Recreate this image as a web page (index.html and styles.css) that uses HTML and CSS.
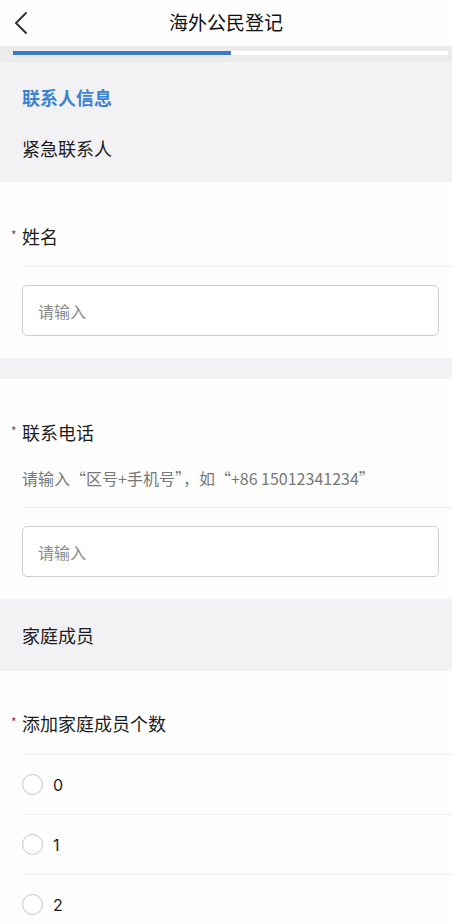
FILE: index.html
```html
<!DOCTYPE html>
<html lang="zh-CN">
<head>
  <meta charset="UTF-8">
  <title>海外公民登记</title>
  <link rel="stylesheet" href="styles.css">
</head>
<body>

  <!-- 顶部导航 -->
  <div class="nav-bar">
    <span class="nav-back">
      <svg width="16" height="24" viewBox="0 0 16 24"><path d="M13 2 L3 12 L13 22" fill="none" stroke="#333" stroke-width="2" stroke-linecap="round" stroke-linejoin="round"/></svg>
    </span>
    <div class="nav-title">海外公民登记</div>
  </div>

  <!-- 进度条 -->
  <div class="progress-wrap">
    <div class="progress-track"><div class="progress-fill" style="width: 50%"></div></div>
  </div>

  <!-- 联系人信息 -->
  <div class="group-head">
    <div class="group-title">联系人信息</div>
    <div class="group-sub">紧急联系人</div>
  </div>

  <div class="card">
    <div class="field-label"><span class="req">*</span>姓名</div>
    <div class="divider"></div>
    <div class="input-box">请输入</div>
  </div>

  <div class="card card-gap">
    <div class="field-label"><span class="req">*</span>联系电话</div>
    <div class="field-hint">请输入“区号+手机号”，如“+86 15012341234”</div>
    <div class="divider"></div>
    <div class="input-box">请输入</div>
  </div>

  <!-- 家庭成员 -->
  <div class="group-bar">家庭成员</div>

  <div class="card card-list">
    <div class="field-label"><span class="req">*</span>添加家庭成员个数</div>
    <div class="divider"></div>
    <div class="radio-row"><span class="radio"></span>0</div>
    <div class="divider"></div>
    <div class="radio-row"><span class="radio"></span>1</div>
    <div class="divider"></div>
    <div class="radio-row"><span class="radio"></span>2</div>
  </div>

</body>
</html>
```

FILE: styles.css
```css
/* 기본 */
body {
  margin: 0;
  padding: 0;
  background: #f2f1f4;
  font-family: "Noto Sans CJK SC", "Noto Sans", sans-serif;
  color: #1c1c1c;
  overflow: hidden;
}

/* 상단 */
.nav-bar {
  height: 46px;
  background: #fefefe;
  display: flex;
  align-items: center;
  justify-content: center;
  position: relative;
}
.nav-back {
  position: absolute;
  left: 13px;
  top: 11px;
}
.nav-title {
  font-size: 19px;
  line-height: 24px;
  color: #111;
  margin-top: -2px;
}

/* 진행 바 */
.progress-wrap {
  background: #ebebeb;
  height: 16px;
  padding: 5px 4px 0 13px;
  box-sizing: border-box;
}
.progress-track {
  height: 4px;
  background: #fff;
}
.progress-fill {
  height: 100%;
  background: #3b79cf;
}

/* 그룹 헤더 */
.group-head {
  padding: 23px 22px 22px;
}
.group-title {
  font-size: 18px;
  line-height: 24px;
  font-weight: bold;
  color: #3b82d0;
}
.group-sub {
  font-size: 18px;
  line-height: 24px;
  margin-top: 27px;
}
.group-bar {
  height: 72px;
  padding-left: 22px;
  display: flex;
  align-items: center;
  font-size: 18px;
}

/* 카드 */
.card {
  background: #fefefe;
  padding: 41px 0 22px 0;
}
.card-gap {
  margin-top: 21px;
  padding-top: 40px;
}
.card-list {
  padding: 39px 0 0 0;
}
.field-label {
  font-size: 18px;
  line-height: 26px;
  padding-left: 11px;
  margin-bottom: 17px;
  display: flex;
  align-items: center;
}
.req {
  width: 11px;
  color: #a3363b;
  font-size: 12px;
  line-height: 12px;
  margin-top: -2px;
}
.field-hint {
  font-size: 16px;
  line-height: 22px;
  color: #777;
  padding-left: 22px;
  margin-top: 22px;
  margin-bottom: 18px;
}
.divider {
  height: 1px;
  background: #ececee;
  margin-left: 22px;
}
.card-list .field-label {
  margin-bottom: 18px;
}
.input-box {
  margin: 18px 13px 0 22px;
  height: 51px;
  box-sizing: border-box;
  border: 1px solid #cfcfd2;
  border-radius: 5px;
  background: #fff;
  padding-left: 15px;
  display: flex;
  align-items: center;
  font-size: 16px;
  color: #8a8a8a;
}

/* 라디오 */
.radio-row {
  height: 59px;
  padding-left: 22px;
  display: flex;
  align-items: center;
  font-family: "Inter", "Noto Sans", sans-serif;
  font-size: 16px;
}
.radio {
  width: 21px;
  height: 21px;
  border: 1px solid #c3c3c3;
  border-radius: 50%;
  margin-right: 10px;
  box-sizing: border-box;
  background: #fff;
}
```
